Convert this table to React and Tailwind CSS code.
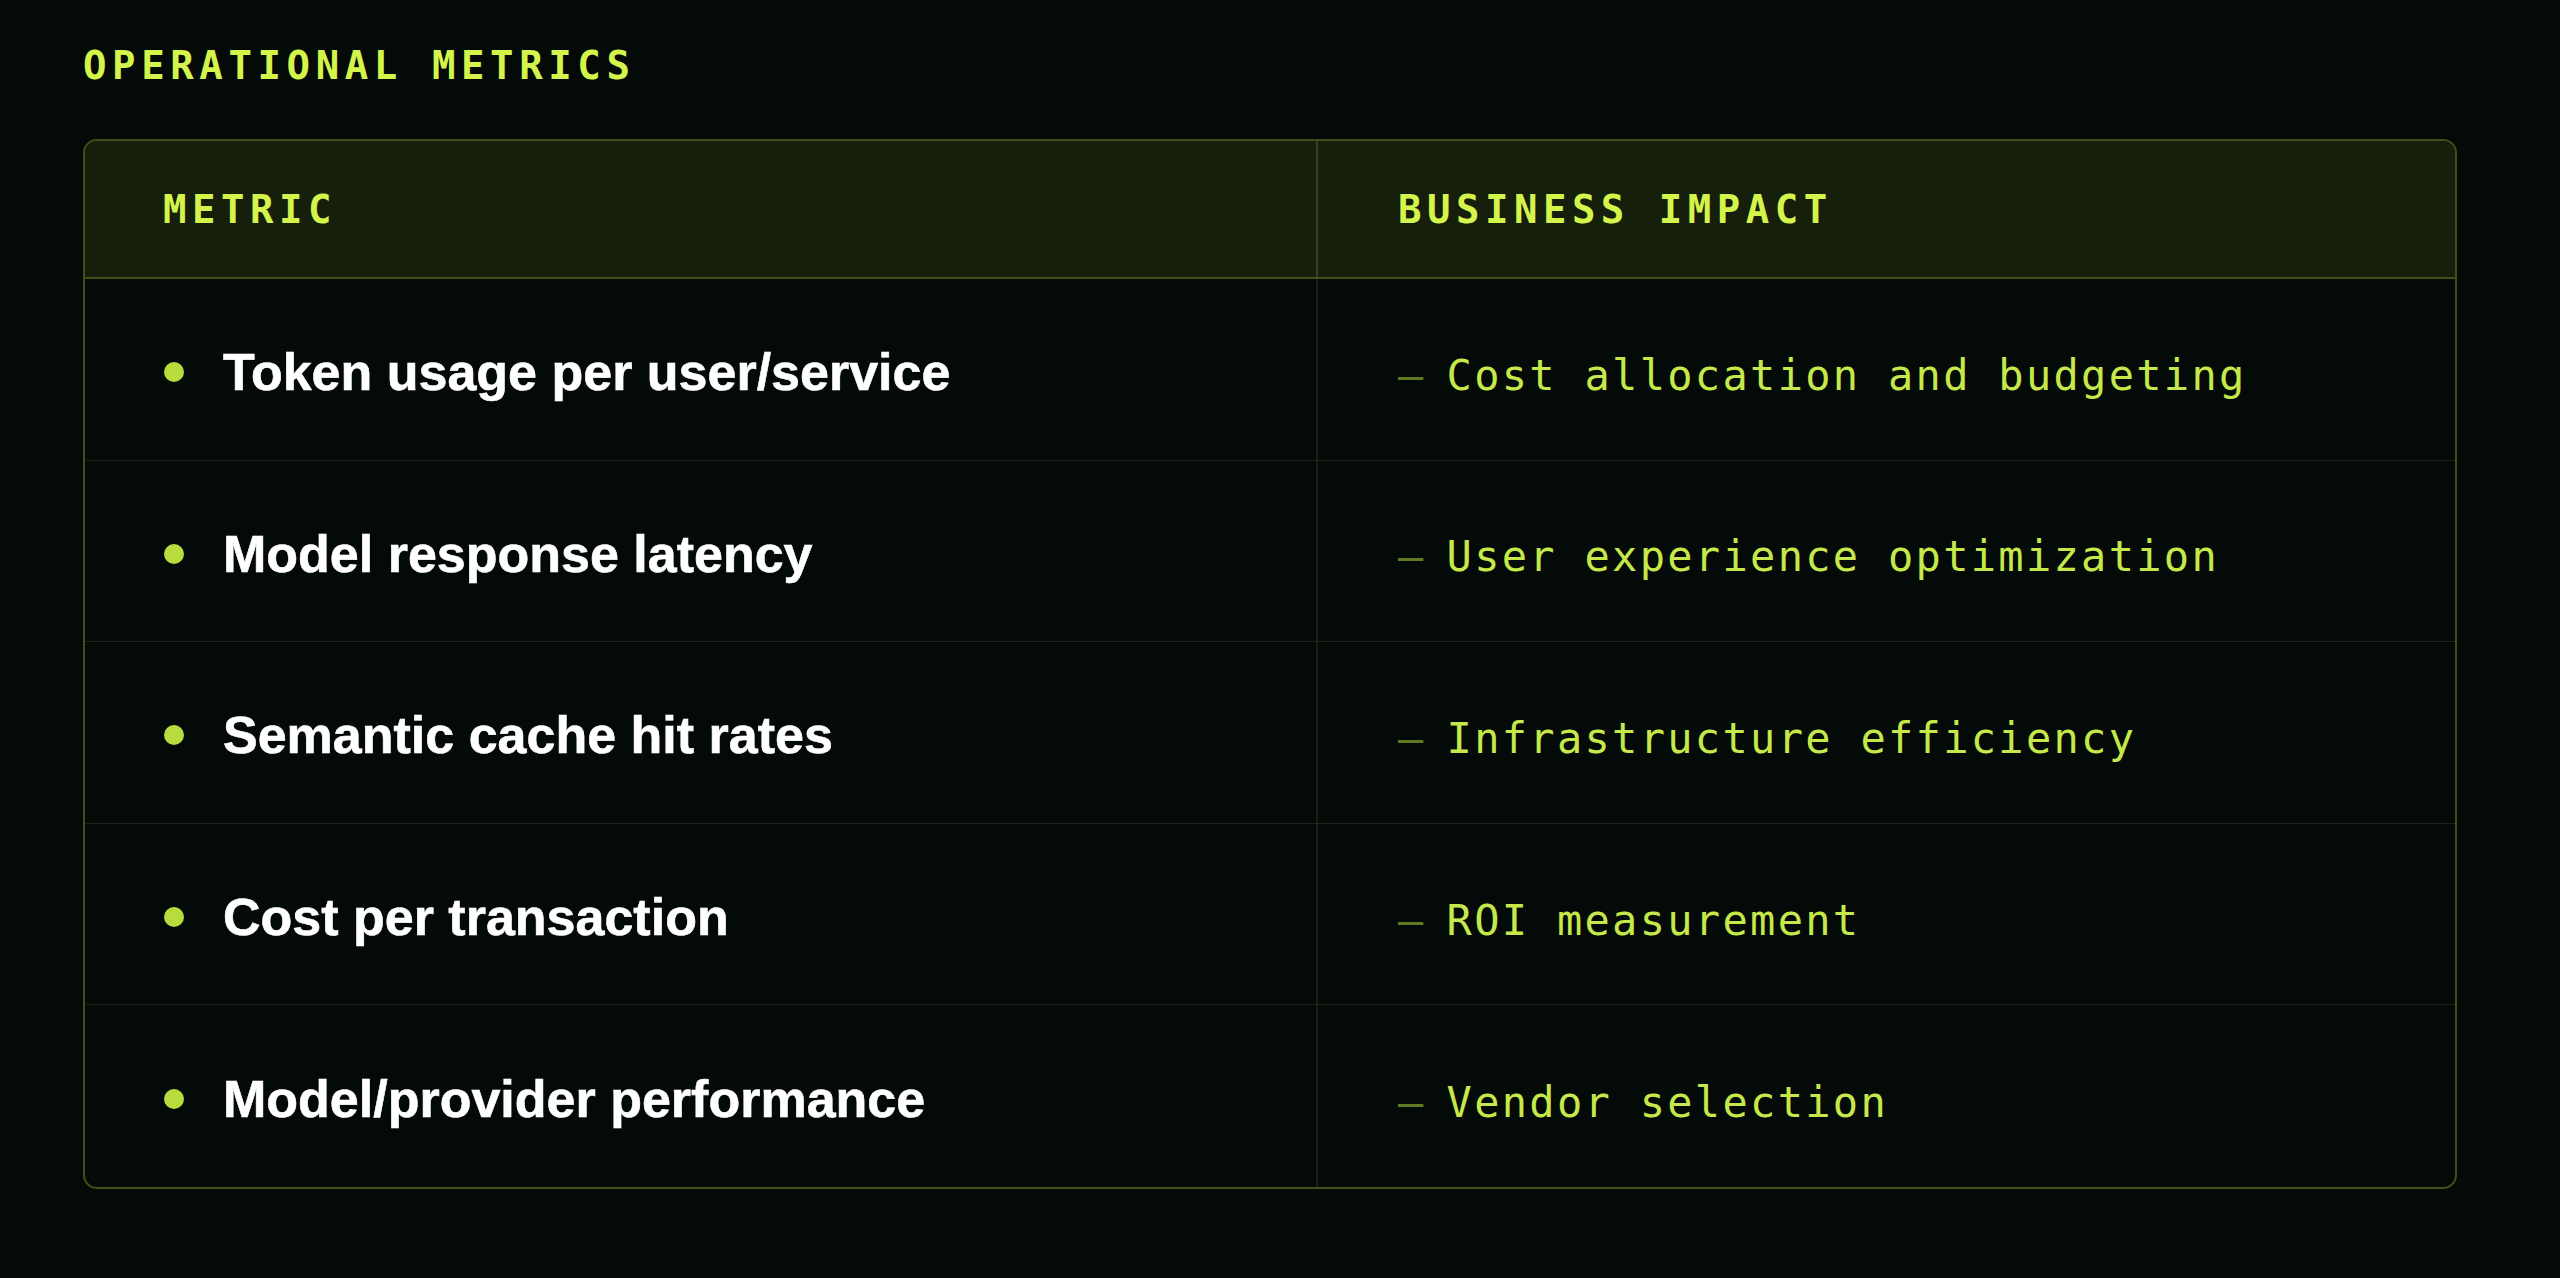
const rows = [
  ['Token usage per user/service', 'Cost allocation and budgeting'],
  ['Model response latency', 'User experience optimization'],
  ['Semantic cache hit rates', 'Infrastructure efficiency'],
  ['Cost per transaction', 'ROI measurement'],
  ['Model/provider performance', 'Vendor selection'],
];

const mono = "font-['DejaVu_Sans_Mono',monospace]";

export default function App() {
  return (
    <div className="min-h-screen bg-[#040a07] pl-[83px] pr-[103px] pt-[45px]">
      <h2 className={`${mono} font-bold text-[39px] leading-[42px] tracking-[5.6px] text-[#d4f44c]`}>
        OPERATIONAL METRICS
      </h2>

      <div className="mt-[52px] rounded-[14px] border-2 border-[#3f5019] overflow-hidden">
        {/* header */}
        <div className="grid grid-cols-[1233px_1fr] h-[138px] bg-[#161e0c] border-b-2 border-[#3f5019]">
          <div className="flex items-center pl-[78px] pt-[2px] border-r-2 border-[#34431a]">
            <span className={`${mono} font-bold text-[39px] tracking-[5.5px] text-[#d4f44c]`}>METRIC</span>
          </div>
          <div className="flex items-center pl-[80px] pt-[2px]">
            <span className={`${mono} font-bold text-[39px] tracking-[5.5px] text-[#d4f44c]`}>BUSINESS IMPACT</span>
          </div>
        </div>

        {/* rows */}
        {rows.map(([metric, impact], i) => (
          <div
            key={metric}
            className={`grid grid-cols-[1233px_1fr] h-[181.6px] ${i < rows.length - 1 ? 'border-b border-[#1c2517]' : ''}`}
          >
            <div className="flex items-center pl-[79px] pt-[6px] border-r-2 border-[#182014]">
              <span className="w-[20px] h-[20px] rounded-full bg-[#b6dc3d] shrink-0" />
              <span className="ml-[39px] font-['Liberation_Sans',Arial,sans-serif] font-bold text-[52px] text-white [-webkit-text-stroke:0.6px_white]">
                {metric}
              </span>
            </div>
            <div className={`flex items-center pl-[80px] pt-[12px] ${mono} text-[42px] tracking-[2.3px]`}>
              <span className="text-[#5f7a22]">–</span>
              <span className="ml-[21px] text-[#c6e84a]">{impact}</span>
            </div>
          </div>
        ))}
      </div>
    </div>
  );
}
